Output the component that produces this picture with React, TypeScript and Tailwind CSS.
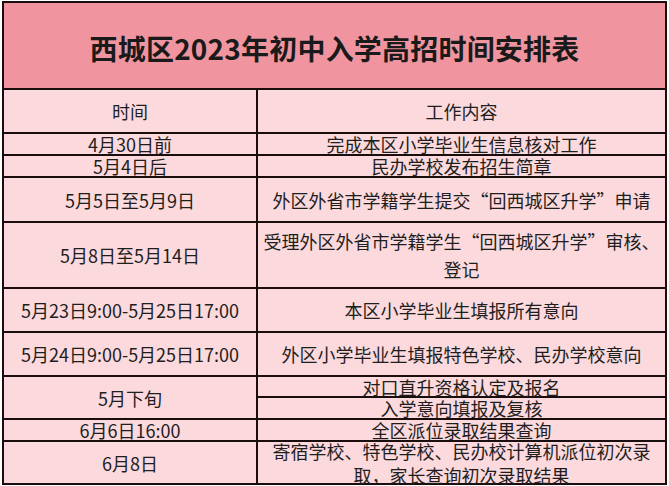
import React from "react";

const font = { fontFamily: '"Noto Sans CJK SC", "Noto Sans", sans-serif' };

function Cell({ children, className = "" }: { children?: React.ReactNode; className?: string }) {
  return (
    <div className={"bg-[#fbd9dc] flex items-center justify-center text-center text-[18px] leading-[18px] text-[#1e1e1e] " + className}>
      {children}
    </div>
  );
}

export default function App() {
  return (
    <div className="w-[669px] h-[486px] bg-white overflow-hidden" style={font}>
      <div className="ml-[2px] mt-[1px] w-[665px] bg-[#1a0d0d] p-[2px] grid grid-cols-[252px_407px] gap-[2px] grid-rows-[85px_42px_20px_20px_43px_64px_42px_42px_19px_20px_20px_41px]">
        <div className="col-span-2 bg-[#f0959f] flex items-center justify-center pt-[4px] text-[28px] font-bold text-[#1a1a1a] tracking-[0.2px]">
          西城区2023年初中入学高招时间安排表
        </div>
        <Cell>时间</Cell>
        <Cell>工作内容</Cell>
        <Cell>4月30日前</Cell>
        <Cell>完成本区小学毕业生信息核对工作</Cell>
        <Cell>5月4日后</Cell>
        <Cell>民办学校发布招生简章</Cell>
        <Cell>5月5日至5月9日</Cell>
        <Cell>外区外省市学籍学生提交“回西城区升学”申请</Cell>
        <Cell>5月8日至5月14日</Cell>
        <Cell className="flex-col leading-[28px]">
          <span>受理外区外省市学籍学生“回西城区升学”审核、</span>
          <span>登记</span>
        </Cell>
        <Cell>5月23日9:00-5月25日17:00</Cell>
        <Cell>本区小学毕业生填报所有意向</Cell>
        <Cell>5月24日9:00-5月25日17:00</Cell>
        <Cell>外区小学毕业生填报特色学校、民办学校意向</Cell>
        <Cell className="row-span-2">5月下旬</Cell>
        <Cell>对口直升资格认定及报名</Cell>
        <Cell>入学意向填报及复核</Cell>
        <Cell>6月6日16:00</Cell>
        <Cell>全区派位录取结果查询</Cell>
        <Cell>6月8日</Cell>
        <Cell className="flex-col leading-[24px]">
          <span>寄宿学校、特色学校、民办校计算机派位初次录</span>
          <span>取，家长查询初次录取结果</span>
        </Cell>
      </div>
    </div>
  );
}
